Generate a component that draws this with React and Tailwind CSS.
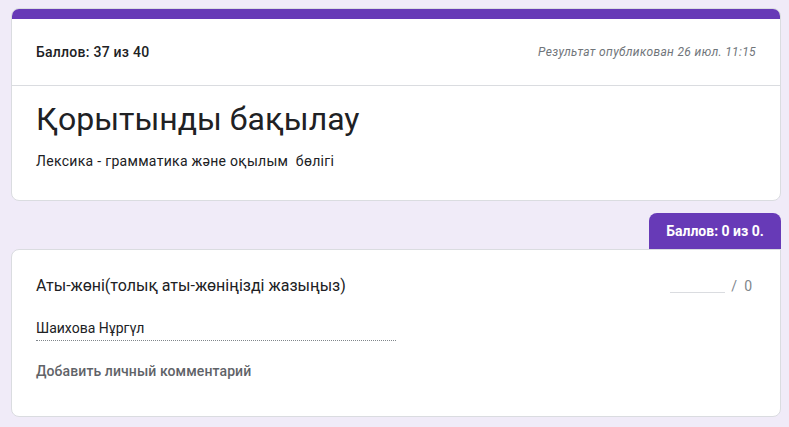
import React from 'react';

export default function App() {
  return (
    <div
      className="min-h-[427px] w-full bg-[#f0ebf8] pt-2 text-[#202124]"
      style={{ fontFamily: 'Roboto, "Noto Sans", sans-serif' }}
    >
      <div className="ml-[11px] w-[770px]">
        {/* Header card */}
        <div className="overflow-hidden rounded-lg border border-[#dadce0] bg-white">
          <div className="h-[10px] bg-[#673ab7]" />
          <div className="flex h-[67px] items-center justify-between border-b border-[#dadce0] pl-6 pr-6">
            <span className="text-[14px] font-medium tracking-[0.25px]">Баллов: 37 из 40</span>
            <span className="text-[12px] italic tracking-[0.35px] text-[#70757a]">Результат опубликован 26 июл. 11:15</span>
          </div>
          <div className="px-6 pb-[29px] pt-[13px]">
            <h1 className="text-[32px] leading-[40px] font-normal">Қорытынды бақылау</h1>
            <p className="mt-3 whitespace-pre text-[14px] leading-5 tracking-[0.3px]">Лексика - грамматика және оқылым  бөлігі</p>
          </div>
        </div>

        {/* Points badge */}
        <div className="mt-3 flex justify-end">
          <div className="flex h-[36px] w-[132px] items-center justify-center rounded-t-lg bg-[#673ab7] text-[14px] font-bold text-white">
            Баллов: 0 из 0.
          </div>
        </div>

        {/* Question card */}
        <div className="rounded-lg rounded-tr-none border border-[#dadce0] bg-white px-6 pb-[35px] pt-6">
          <div className="flex items-start justify-between">
            <div className="text-[16px] leading-6">Аты-жөні(толық аты-жөніңізді жазыңыз)</div>
            <div className="flex items-center pr-[4px] text-[14px] text-[#80868b]">
              <div className="mt-[12px] h-[1px] w-[55px] bg-[#dadce0]" />
              <span className="ml-[6px] leading-6">/</span>
              <span className="ml-[7px] leading-6">0</span>
            </div>
          </div>
          <div className="mt-5 w-[360px] border-b border-dotted border-[#80868b] pb-[2px] text-[14px] leading-5">
            Шаихова Нұргүл
          </div>
          <div className="mt-5 text-[14px] font-medium leading-5 tracking-[0.1px] text-[#5f6368]">
            Добавить личный комментарий
          </div>
        </div>
      </div>
    </div>
  );
}
